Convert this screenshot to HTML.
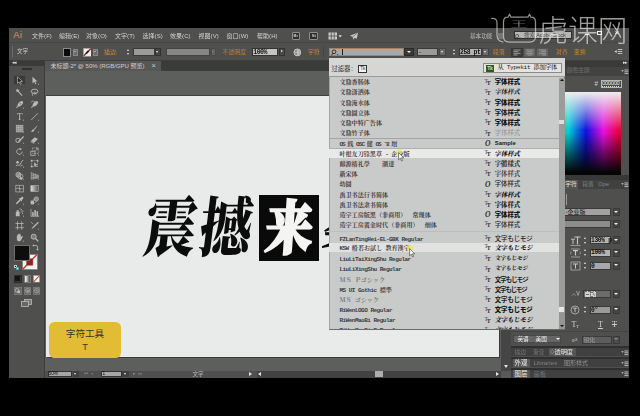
<!DOCTYPE html>
<html><head><meta charset="utf-8">
<style>
*{margin:0;padding:0;box-sizing:border-box}
html,body{width:640px;height:416px;overflow:hidden;background:#000}
body{font-family:"Liberation Sans","Noto Sans CJK SC",sans-serif;position:relative;color:#ccc}
.a{position:absolute}
.t{position:absolute;white-space:nowrap;line-height:1;text-spacing-trim:space-all}
#app{left:9px;top:28px;width:620px;height:350px;background:#4f504e;overflow:hidden}

#L{left:0;top:0;width:640px;height:416px;overflow:hidden;filter:blur(0.45px)}
.mn{font-size:6px;color:#d2d2d2;top:33.3px;letter-spacing:0.05px}
.or{color:#cf8336;font-size:5.9px;margin-top:1.2px}
.fld{background:#9a9a9a;border:0.5px solid #333}
</style></head><body>
<div class="a" id="app"></div>
<div class="a" id="L">
<!-- MENU BAR -->
<div class="t" style="left:13px;top:30.3px;font-size:9.8px;color:#ad7b62;font-weight:bold;letter-spacing:-0.3px">Ai</div>
<div class="t mn" style="left:32px">文件(F)</div>
<div class="t mn" style="left:59px">编辑(E)</div>
<div class="t mn" style="left:86px">对象(O)</div>
<div class="t mn" style="left:115px">文字(T)</div>
<div class="t mn" style="left:142.5px">选择(S)</div>
<div class="t mn" style="left:170px">效果(C)</div>
<div class="t mn" style="left:198.5px">视图(V)</div>
<div class="t mn" style="left:226.5px">窗口(W)</div>
<div class="t mn" style="left:257px">帮助(H)</div>

<!-- menu bar right icons -->
<div class="a" style="left:291.5px;top:32px;width:8.8px;height:7.5px;border:0.8px solid #8e8e8e;background:#2e2e2e;border-radius:1px"></div>
<div class="t" style="left:293.6px;top:33.7px;font-size:4.2px;color:#ccc;font-weight:bold">Br</div>
<div class="a" style="left:309.3px;top:32px;width:8.8px;height:7.5px;border:0.8px solid #8e8e8e;background:#2e2e2e;border-radius:1px"></div>
<div class="t" style="left:311.8px;top:33.7px;font-size:4.2px;color:#ccc;font-weight:bold">St</div>
<svg class="a" style="left:328.3px;top:31.8px" width="16" height="9" viewBox="0 0 16 9"><rect x="0.5" y="0.5" width="8.5" height="7" fill="#c9c9c9"/><path d="M3.3 0.5v7M6.2 0.5v7M0.5 4h8.5" stroke="#4f504e" stroke-width="0.8"/><path d="M10.5 3.2h3.4l-1.7 2.2z" fill="#ddd"/></svg>
<svg class="a" style="left:349px;top:31.5px" width="10" height="9" viewBox="0 0 11 10"><path d="M10 0.5L1 4.2l3 1.2 0.6 3.2 1.6-2.2 2.4 1z" fill="#c8c8c8"/><path d="M10 0.5L4 5.4" stroke="#4f504e" stroke-width="0.6"/></svg>
<div class="t" style="left:470px;top:33.5px;font-size:5.6px;color:#bcbcbc">基本功能</div>
<svg class="a" style="left:497px;top:33px" width="8" height="6" viewBox="0 0 8 6"><path d="M1 1h5M1 3h5M1 5h5" stroke="#bbb" stroke-width="0.7"/></svg>
<div class="a" style="left:513.5px;top:31.3px;width:58.5px;height:8.2px;background:#b6b6b6;border:0.5px solid #2e2e2e"></div>
<div class="t" style="left:515px;top:31.5px;font-size:7px;color:#333">ρ.</div><div class="t" style="left:524px;top:33px;font-size:5.6px;color:#4a4a4a;letter-spacing:-0.2px">搜索 Adobe Stock</div>
<div class="a" style="left:584.5px;top:33.6px;width:4.6px;height:1.2px;background:#e8e8e8"></div>
<div class="a" style="left:597.3px;top:30.8px;width:4.4px;height:4.4px;border:1px solid #eee"></div>
<div class="t" style="left:614.6px;top:28.6px;font-size:8px;color:#eee">×</div>

<!-- CONTROL BAR -->
<div class="a" id="cb" style="left:0;top:1.2px;width:640px;height:60px">
<div class="a" style="left:9px;top:41px;width:620px;height:0.7px;background:#474747"></div>
<div class="a" style="left:11.5px;top:45px;width:1px;height:12px;background:#6a6a6a"></div>
<div class="t" style="left:17px;top:48px;font-size:5.6px;color:#d0d0d0">文字</div>
<div class="a" style="left:63px;top:46.8px;width:8px;height:8.6px;background:#0b0b0b;border:0.8px solid #8a8a8a"></div>
<div class="a" style="left:73px;top:47.5px;width:5px;height:7px;background:#6b6b6b;border:0.5px solid #888"></div>
<div class="a" style="left:74.2px;top:50px;border:1.4px solid transparent;border-top:1.8px solid #eee"></div>
<svg class="a" style="left:82.7px;top:46.8px" width="8.6" height="8.6" viewBox="0 0 10.5 10.5"><rect x="0.4" y="0.4" width="9.7" height="9.7" fill="#f4f0ee" stroke="#9a9a9a" stroke-width="0.8"/><path d="M1 9.5L9.5 1" stroke="#8a2f28" stroke-width="1.7"/><path d="M3.6 6.900L6.900 3.600" stroke="#3a1a18" stroke-width="2"/></svg>
<div class="a" style="left:93px;top:47.5px;width:5px;height:7px;background:#6b6b6b;border:0.5px solid #888"></div>
<div class="a" style="left:94.2px;top:50px;border:1.4px solid transparent;border-top:1.8px solid #eee"></div>
<div class="t or" style="left:104px;top:47.3px">描边:</div>
<div class="a" style="left:127px;top:47.6px;border:1.6px solid transparent;border-bottom:2px solid #e4e4e4;border-top:0"></div>
<div class="a" style="left:127px;top:52.3px;border:1.6px solid transparent;border-top:2px solid #e4e4e4;border-bottom:0"></div>
<div class="a" style="left:133px;top:46.9px;width:21.5px;height:8.2px;background:#9b9b9b;border:0.5px solid #3a3a3a"></div>
<div class="a" style="left:155px;top:46.9px;width:6px;height:8.2px;background:#474747;border:0.5px solid #333"></div>
<div class="a" style="left:156.2px;top:50.2px;border:1.7px solid transparent;border-top:2.2px solid #f0f0f0"></div>
<div class="a" style="left:166px;top:46.9px;width:44px;height:8.2px;background:#868686;border:0.5px solid #444"></div>
<div class="a" style="left:211px;top:46.9px;width:5px;height:8.2px;background:#636363;border:0.5px solid #4a4a4a"></div>
<div class="a" style="left:212px;top:50.3px;border:1.4px solid transparent;border-top:1.8px solid #999"></div>
<div class="t or" style="left:222.5px;top:47.3px;color:#c47a30">不透明度</div>
<div class="a" style="left:252px;top:46.9px;width:25.5px;height:8.2px;background:#c4c4c4;border:0.5px solid #333"></div>
<div class="t" style="left:253.3px;top:49px;font-size:6.5px;color:#111;font-family:'Liberation Mono',monospace;letter-spacing:-0.5px;font-weight:bold">100%</div>
<div class="a" style="left:279px;top:46.9px;width:5.5px;height:8.2px;background:#4a4a4a;border:0.5px solid #333"></div>
<div class="a" style="left:281px;top:49.3px;border:1.7px solid transparent;border-left:2.3px solid #eee"></div>
<svg class="a" style="left:292.5px;top:46.6px" width="8.8" height="8.8" viewBox="0 0 10 10"><circle cx="5" cy="5" r="3.9" fill="#8c8c8c" stroke="#d4d4d4" stroke-width="0.9"/><path d="M5 1.2v7.6M1.3 5h7.4" stroke="#d4d4d4" stroke-width="0.6"/><path d="M5 1.3A3.8 3.8 0 0 1 5 8.7" fill="#cfcfcf" opacity=".6"/></svg>
<div class="t or" style="left:308px;top:47.3px">字符</div>
<div class="a" style="left:322.5px;top:45px;width:1px;height:12px;background:#444"></div>

<!-- font field -->
<div class="a" style="left:329px;top:46.7px;width:75px;height:8.6px;background:#a9a9a7;border:0.8px solid #a5815f"></div>
<svg class="a" style="left:331px;top:47.7px" width="8.5" height="7.5" viewBox="0 0 9 8"><circle cx="3.2" cy="3" r="2" fill="none" stroke="#222" stroke-width="0.9"/><path d="M1.8 4.6L0.6 6.6" stroke="#222" stroke-width="1"/><path d="M6 5.2h2l-1 1.3z" fill="#222"/></svg>
<div class="a" style="left:341.5px;top:47.9px;width:0.7px;height:6.2px;background:#222"></div>
<div class="a" style="left:404px;top:46.7px;width:10px;height:8.6px;background:#3a3a3a;border:0.5px solid #2a2a2a"></div>
<div class="a" style="left:406.6px;top:50px;border:2px solid transparent;border-top:2.6px solid #f2f2f2"></div>
<div class="a" style="left:417px;top:46.9px;width:21px;height:8.2px;background:#9b9b9b;border:0.5px solid #3a3a3a"></div>
<div class="t" style="left:419px;top:47.8px;font-size:6.4px;color:#222">-</div>
<div class="a" style="left:439px;top:46.9px;width:7px;height:8.2px;background:#6a6a6a;border:0.5px solid #444"></div>
<div class="a" style="left:440.6px;top:50.2px;border:1.7px solid transparent;border-top:2.2px solid #f0f0f0"></div>
<div class="a" style="left:452.5px;top:47.6px;border:1.6px solid transparent;border-bottom:2px solid #e4e4e4;border-top:0"></div>
<div class="a" style="left:452.5px;top:52.3px;border:1.6px solid transparent;border-top:2px solid #e4e4e4;border-bottom:0"></div>
<div class="a" style="left:459px;top:46.9px;width:22.5px;height:8.2px;background:#b4b4b4;border:0.5px solid #3a3a3a"></div>
<div class="t" style="left:460px;top:49px;font-size:6.4px;color:#111;font-family:'Liberation Mono',monospace;letter-spacing:-0.45px;font-weight:bold">258 pt</div>
<div class="a" style="left:482px;top:46.9px;width:6.5px;height:8.2px;background:#6a6a6a;border:0.5px solid #444"></div>
<div class="a" style="left:483.5px;top:50.2px;border:1.7px solid transparent;border-top:2.2px solid #f0f0f0"></div>
<div class="t or" style="left:493px;top:47.3px">段落</div>
<svg class="a" style="left:510.5px;top:46.5px" width="38" height="9" viewBox="0 0 38 11" preserveAspectRatio="none">
<rect x="0.3" y="0.3" width="11.5" height="10.4" fill="#3c3c3c" stroke="#2d2d2d" stroke-width="0.5"/>
<rect x="13" y="0.3" width="11.5" height="10.4" fill="#666" stroke="#4a4a4a" stroke-width="0.5"/>
<rect x="25.7" y="0.3" width="11.5" height="10.4" fill="#666" stroke="#4a4a4a" stroke-width="0.5"/>
<path d="M2.5 2.5h7M2.5 4.5h5M2.5 6.5h7M2.5 8.5h4" stroke="#bdbdbd" stroke-width="0.8"/>
<path d="M15 2.5h7.5M16 4.5h5.5M15 6.5h7.5M16.5 8.5h4.5" stroke="#a9a9a9" stroke-width="0.8"/>
<path d="M28 2.5h7M30 4.5h5M28 6.5h7M31 8.5h4" stroke="#a9a9a9" stroke-width="0.8"/>
</svg>
<div class="t or" style="left:556px;top:47.3px">对齐</div>
<div class="t or" style="left:574px;top:47.3px">变换</div>
<svg class="a" style="left:614px;top:47px" width="10" height="8" viewBox="0 0 10 8"><path d="M0.5 3.5l2.2-1.6v3.2z" fill="#ddd"/><path d="M3.8 1.5h4.5M3.8 3.5h4.5M3.8 5.5h4.5" stroke="#ddd" stroke-width="0.8"/></svg>

</div>
<!-- TAB ROW -->
<div class="a" style="left:9px;top:60px;width:620px;height:1px;background:#3e3e3e"></div>
<div class="a" style="left:45px;top:61px;width:467px;height:9.5px;background:#3b3b3b"></div>
<div class="a" style="left:45px;top:61px;width:115.5px;height:9.5px;background:#575757"></div>
<div class="t" style="left:50.5px;top:62.8px;font-size:6px;color:#d0d0d0">未标题-2* @ 50% (RGB/GPU 预览)</div>
<div class="t" style="left:151.5px;top:61.5px;font-size:7.5px;color:#cfcfcf">×</div>
<!-- canvas area -->
<div class="a" style="left:45px;top:70.5px;width:467px;height:300px;background:#5d5f5c"></div>
<div class="a" style="left:44px;top:61px;width:1.2px;height:317px;background:#3b3b3b"></div>
<div class="a" style="left:45.5px;top:95px;width:454px;height:1px;background:#414141"></div>
<div class="a" id="art" style="left:45.5px;top:96px;width:453px;height:261px;background:#e9ebea"></div>
<!-- TOOLS PANEL -->
<div class="a" style="left:9px;top:61px;width:35px;height:5px;background:#3a3a3a"></div>
<div class="t" style="left:11.5px;top:60.6px;font-size:4.5px;color:#ddd;letter-spacing:-1px">◂◂</div>
<div class="a" style="left:21.5px;top:68.3px;width:10.5px;height:1.5px;background:#303030"></div>
<div class="a" style="left:13.3px;top:74.8px;width:13px;height:10.6px;background:#3a3a3a;border:0.5px solid #4a4a4a"></div>
<svg class="a" style="left:14.9px;top:75.7px" width="9.2" height="9.2" viewBox="0 0 11 11"><path d="M3 1l0 8 2-2 1.4 3 1.2-.5-1.4-3h2.8z" fill="#222" stroke="#bababa" stroke-width="0.8"/></svg>
<svg class="a" style="left:29.7px;top:75.7px" width="9.2" height="9.2" viewBox="0 0 11 11"><path d="M3 1l0 8 2-2 1.4 3 1.2-.5-1.4-3h2.8z" fill="#bababa"/><path d="M9.3 9.3h1.6v1.6z" fill="#bdbdbd"/></svg>
<svg class="a" style="left:14.9px;top:87.7px" width="9.2" height="9.2" viewBox="0 0 11 11"><path d="M2 2l6.5 7" stroke="#bababa" stroke-width="1.3"/><path d="M3.2 0.6l.6 1.6 1.7.2-1.3 1.1.4 1.7-1.4-.9-1.5.9.4-1.7L.8 2.4l1.7-.2z" fill="#bababa"/></svg>
<svg class="a" style="left:29.7px;top:87.7px" width="9.2" height="9.2" viewBox="0 0 11 11"><ellipse cx="5.5" cy="4" rx="4" ry="2.6" fill="none" stroke="#bababa" stroke-width="1.1"/><path d="M3 6c-1 1 .5 2 .2 3.5" stroke="#bababa" fill="none" stroke-width="0.9"/><path d="M5 3.5l3 4-1.6-.2-.6 1.5z" fill="#bababa"/></svg>
<svg class="a" style="left:14.9px;top:99.7px" width="9.2" height="9.2" viewBox="0 0 11 11"><path d="M8.5 1.2c-3 .4-5 2.2-5.6 5.4l1.5 1.5c3.2-.6 5-2.6 5.4-5.6z" fill="#bababa"/><path d="M2.6 7l-1.6 3 3-1.6z" fill="#bababa"/><circle cx="6.3" cy="4.6" r="0.8" fill="#4f504e"/><path d="M9.3 9.3h1.6v1.6z" fill="#bdbdbd"/></svg>
<svg class="a" style="left:29.7px;top:99.7px" width="9.2" height="9.2" viewBox="0 0 11 11"><path d="M8.5 1.2c-3 .4-5 2.2-5.6 5.4l1.5 1.5c3.2-.6 5-2.6 5.4-5.6z" fill="#bababa"/><path d="M2.6 7l-1.6 3 3-1.6z" fill="#bababa"/><path d="M1 3c2-2.5 4-2 5-.5" stroke="#bababa" fill="none" stroke-width="0.8"/></svg>
<svg class="a" style="left:14.9px;top:112.2px" width="9.2" height="9.2" viewBox="0 0 11 11"><text x="5.5" y="9.6" text-anchor="middle" font-family="Liberation Serif,serif" font-size="11.5" fill="#bababa">T</text><path d="M9.3 9.3h1.6v1.6z" fill="#bdbdbd"/></svg>
<svg class="a" style="left:29.7px;top:112.2px" width="9.2" height="9.2" viewBox="0 0 11 11"><path d="M1.5 9.5L9.5 1.5" stroke="#bababa" stroke-width="1"/><path d="M9.3 9.3h1.6v1.6z" fill="#bdbdbd"/></svg>
<svg class="a" style="left:14.9px;top:123.7px" width="9.2" height="9.2" viewBox="0 0 11 11"><rect x="1.5" y="1.5" width="8" height="8" fill="#8a8a8a" stroke="#bababa" stroke-width="0.8"/><path d="M4.2 1.5v8M6.8 1.5v8M1.5 4.2h8M1.5 6.8h8" stroke="#bababa" stroke-width="0.6"/><path d="M9.3 9.3h1.6v1.6z" fill="#bdbdbd"/></svg>
<svg class="a" style="left:29.7px;top:123.7px" width="9.2" height="9.2" viewBox="0 0 11 11"><path d="M9.8 0.8L4.6 6l1 1z" fill="#bababa"/><path d="M4.2 6.3c-1.8-.2-1.6 2-3.2 2.6 2 .8 4.4.2 4.2-1.6z" fill="#bababa"/><path d="M9.3 9.3h1.6v1.6z" fill="#bdbdbd"/></svg>
<svg class="a" style="left:14.9px;top:135.2px" width="9.2" height="9.2" viewBox="0 0 11 11"><circle cx="3.6" cy="6.5" r="2.6" fill="none" stroke="#bababa" stroke-width="1"/><path d="M9.8 1.2L4.4 6.6l-.8 2 2-.8 5.2-5.4z" fill="#bababa"/><path d="M9.3 9.3h1.6v1.6z" fill="#bdbdbd"/></svg>
<svg class="a" style="left:29.7px;top:135.2px" width="9.2" height="9.2" viewBox="0 0 11 11"><path d="M1 7.2l4.6-4.6 4 2.2-4.6 4.6z" fill="#bababa"/><path d="M1 7.2l0 1.4 4 2.2 0-1.4z" fill="#9a9a9a"/><path d="M9.3 9.3h1.6v1.6z" fill="#bdbdbd"/></svg>
<svg class="a" style="left:14.9px;top:147.2px" width="9.2" height="9.2" viewBox="0 0 11 11"><path d="M8.6 5.5a3.3 3.3 0 1 1-1.6-2.8" fill="none" stroke="#bababa" stroke-width="1"/><path d="M5.8 0.8l2.6 1.8-2.8 1.2z" fill="#bababa"/><path d="M9.3 9.3h1.6v1.6z" fill="#bdbdbd"/></svg>
<svg class="a" style="left:29.7px;top:147.2px" width="9.2" height="9.2" viewBox="0 0 11 11"><rect x="1" y="5" width="5" height="5" fill="none" stroke="#bababa" stroke-width="0.9"/><rect x="3.2" y="1" width="6.8" height="6.8" fill="none" stroke="#bababa" stroke-width="0.8" stroke-dasharray="1.2 .8"/><path d="M6 5l3-3M9.4 1.4v2.2M9.4 1.4H7.2" stroke="#bababa" stroke-width="0.8" fill="none"/><path d="M9.3 9.3h1.6v1.6z" fill="#bdbdbd"/></svg>
<svg class="a" style="left:14.9px;top:159.2px" width="9.2" height="9.2" viewBox="0 0 11 11"><path d="M1 8.5c2-3 3.5 1 5.5-2.5S8 2 10 1.5" stroke="#bababa" fill="none" stroke-width="1.1"/><circle cx="3" cy="4" r="1.6" fill="#bababa"/><path d="M6.5 8.5l2.5-1.2" stroke="#bababa" stroke-width="1"/><path d="M9.3 9.3h1.6v1.6z" fill="#bdbdbd"/></svg>
<svg class="a" style="left:29.7px;top:159.2px" width="9.2" height="9.2" viewBox="0 0 11 11"><rect x="2" y="2" width="7" height="7" fill="none" stroke="#bababa" stroke-width="0.8" stroke-dasharray="1.4 .8"/><rect x="1" y="1" width="2" height="2" fill="#bababa"/><rect x="8" y="1" width="2" height="2" fill="#bababa"/><rect x="1" y="8" width="2" height="2" fill="#bababa"/><path d="M5 4l0 5 1.2-1.2.9 1.8.9-.4-.9-1.8H9z" fill="#bababa"/></svg>
<svg class="a" style="left:14.9px;top:171.2px" width="9.2" height="9.2" viewBox="0 0 11 11"><circle cx="4" cy="4.5" r="3" fill="#8a8a8a" stroke="#bababa" stroke-width="0.9"/><circle cx="6.5" cy="6.5" r="3" fill="none" stroke="#bababa" stroke-width="0.9"/><path d="M6 6l0 4.5 1.1-1 .8 1.5.8-.4-.8-1.5h1.6z" fill="#bababa"/><path d="M9.3 9.3h1.6v1.6z" fill="#bdbdbd"/></svg>
<svg class="a" style="left:29.7px;top:171.2px" width="9.2" height="9.2" viewBox="0 0 11 11"><path d="M1.5 1v9M4 2v7.5M6.3 3v6M8.3 3.8v4.8M10 4.4v3.8M1.5 3l8.5 2.4M1.5 5.5l8.5 1M1.5 8l8.5-.4M1.5 10l8.5-1.8" stroke="#bababa" stroke-width="0.7" fill="none"/><path d="M9.3 9.3h1.6v1.6z" fill="#bdbdbd"/></svg>
<svg class="a" style="left:14.9px;top:183.7px" width="9.2" height="9.2" viewBox="0 0 11 11"><rect x="1" y="1.5" width="9" height="8" fill="none" stroke="#bababa" stroke-width="0.8"/><path d="M1 5.5c3-1.5 6 1.5 9 0M5.5 1.5c-1.2 3 1.2 5 0 8" stroke="#bababa" stroke-width="0.7" fill="none"/><circle cx="5.5" cy="5.5" r="1" fill="#bababa"/></svg>
<svg class="a" style="left:29.7px;top:183.7px" width="9.2" height="9.2" viewBox="0 0 11 11"><defs><linearGradient id="gg"><stop offset="0" stop-color="#e0e0e0"/><stop offset="1" stop-color="#555"/></linearGradient></defs><rect x="1" y="2" width="9" height="7" fill="url(#gg)" stroke="#bababa" stroke-width="0.7"/></svg>
<svg class="a" style="left:14.9px;top:196.2px" width="9.2" height="9.2" viewBox="0 0 11 11"><path d="M9.6 1.4c-.8-.8-1.8-.4-2.4.4L6 3l-.7-.6-.9.9 3.300 3.300.9-.9L8 5l1.200-1.200c.8-.6 1.200-1.600.4-2.400z" fill="#bababa"/><path d="M5.200 4.400L1.600 8l-.4 1.800 1.800-.4 3.600-3.600z" fill="#bababa"/><path d="M9.3 9.3h1.6v1.6z" fill="#bdbdbd"/></svg>
<svg class="a" style="left:29.7px;top:196.2px" width="9.2" height="9.2" viewBox="0 0 11 11"><rect x="0.8" y="5.500" width="4" height="4.500" fill="#bababa"/><circle cx="7.600" cy="3.600" r="2.600" fill="#8a8a8a" stroke="#bababa" stroke-width="0.800"/><path d="M3 5l3-1.500M4.800 9l3.400-2.800" stroke="#bababa" stroke-width="0.600"/><path d="M9.3 9.3h1.6v1.6z" fill="#bdbdbd"/></svg>
<svg class="a" style="left:14.9px;top:208.2px" width="9.2" height="9.2" viewBox="0 0 11 11"><rect x="1" y="4.500" width="4.500" height="5.500" rx="0.800" fill="#bababa"/><rect x="2" y="2.600" width="2.500" height="2" fill="#bababa"/><circle cx="7.500" cy="2" r="0.800" fill="#bababa"/><circle cx="9.300" cy="3.800" r="0.800" fill="#bababa"/><circle cx="7.300" cy="4.600" r="0.700" fill="#bababa"/><circle cx="9" cy="6.400" r="0.700" fill="#bababa"/><circle cx="6" cy="1" r="0.600" fill="#bababa"/><path d="M9.3 9.3h1.6v1.6z" fill="#bdbdbd"/></svg>
<svg class="a" style="left:29.7px;top:208.2px" width="9.2" height="9.2" viewBox="0 0 11 11"><path d="M1.200 1v9h9" stroke="#bababa" fill="none" stroke-width="0.800"/><rect x="2.600" y="5" width="1.800" height="4.500" fill="#bababa"/><rect x="5.200" y="2.500" width="1.800" height="7" fill="#bababa"/><rect x="7.800" y="4" width="1.800" height="5.500" fill="#bababa"/><path d="M9.3 9.3h1.6v1.6z" fill="#bdbdbd"/></svg>
<svg class="a" style="left:14.9px;top:220.7px" width="9.2" height="9.2" viewBox="0 0 11 11"><path d="M3 0.500v10M8 0.500v10M0.500 3h10M0.500 8h10" stroke="#bababa" stroke-width="0.900"/></svg>
<svg class="a" style="left:29.7px;top:220.7px" width="9.2" height="9.2" viewBox="0 0 11 11"><path d="M9.500 1L3.500 7l-2 3 3-2 6-6z" fill="#bababa"/><path d="M1 1l3 3" stroke="#bababa" stroke-width="0.800"/><path d="M9.3 9.3h1.6v1.6z" fill="#bdbdbd"/></svg>
<svg class="a" style="left:14.9px;top:232.7px" width="9.2" height="9.2" viewBox="0 0 11 11"><path d="M2.200 6.500V3.400c0-.8 1.100-.8 1.100 0V2c0-.9 1.200-.9 1.200 0v-.6c0-.9 1.200-.9 1.200 0V2c0-.8 1.200-.8 1.200 0v3.200l1.300-1.500c.6-.6 1.500 0 1 .8L7.400 8.500c-.5.900-1.300 1.500-2.400 1.500-1.800 0-2.800-1.200-2.800-3.500z" fill="#bababa"/><path d="M9.3 9.3h1.6v1.6z" fill="#bdbdbd"/></svg>
<svg class="a" style="left:29.7px;top:232.7px" width="9.2" height="9.2" viewBox="0 0 11 11"><circle cx="4.400" cy="4.400" r="3" fill="#7a7a7a" stroke="#bababa" stroke-width="1.100"/><path d="M6.600 6.600l3.400 3.400" stroke="#bababa" stroke-width="1.600"/></svg>
<div class="a" style="left:22px;top:253.500px;width:15.500px;height:16px;background:#f3f1f0;border:0.600px solid #888"></div>
<svg class="a" style="left:22px;top:253.500px" width="15.500" height="16" viewBox="0 0 15.500 16"><path d="M0.500 15.500L15 0.500" stroke="#c8322a" stroke-width="1.300"/><rect x="4.600" y="4.800" width="6.300" height="6.400" fill="#7a2a26" stroke="#c8322a" stroke-width="0.500"/></svg>
<div class="a" style="left:13.500px;top:245px;width:16px;height:16px;background:#0d0d0d;border:0.800px solid #6e6e6e"></div>
<svg class="a" style="left:32px;top:244px" width="7" height="7" viewBox="0 0 7 7"><path d="M1.500 1.500h2.500a1.500 1.500 0 0 1 1.500 1.500v2.500" stroke="#bababa" fill="none" stroke-width="0.800"/><path d="M0.300 1.500l1.700-1.200v2.400zM5.500 6.700L4.300 5h2.400z" fill="#bababa"/></svg>
<div class="a" style="left:13.500px;top:264.500px;width:3.600px;height:3.600px;background:#111;border:0.500px solid #ccc"></div>
<div class="a" style="left:15.500px;top:266.500px;width:3.600px;height:3.600px;background:#eee;border:0.500px solid #4aa"></div>
<div class="a" style="left:13.500px;top:275px;width:8px;height:7.500px;background:#3a3a3a;border:0.500px solid #2b2b2b"></div>
<div class="a" style="left:15px;top:276.300px;width:5px;height:5px;background:#141414"></div>
<div class="a" style="left:23.500px;top:275px;width:7px;height:7.500px;background:linear-gradient(90deg,#fff,#444);border:0.500px solid #777"></div>
<svg class="a" style="left:33px;top:275px" width="7" height="7.500" viewBox="0 0 7 7.500"><rect x="0.300" y="0.300" width="6.400" height="6.900" fill="#f4f4f4" stroke="#777" stroke-width="0.500"/><path d="M0.600 7L6.500 0.500" stroke="#c8322a" stroke-width="1.100"/></svg>
<div class="a" style="left:14px;top:287px;width:7.500px;height:7.500px;background:#676767;border:0.500px solid #777"></div>
<div class="a" style="left:23.5px;top:287px;width:7.500px;height:7.500px;background:#676767;border:0.500px solid #777"></div>
<div class="a" style="left:32.5px;top:287px;width:7.500px;height:7.500px;background:#676767;border:0.500px solid #777"></div>
<svg class="a" style="left:14px;top:287px" width="7.500" height="7.500" viewBox="0 0 7.500 7.500"><circle cx="3" cy="3.300" r="1.800" fill="none" stroke="#bababa" stroke-width="0.700"/><rect x="3.300" y="3.500" width="2.800" height="2.600" fill="#bababa"/></svg>
<svg class="a" style="left:23.500px;top:287px" width="7.500" height="7.500" viewBox="0 0 7.500 7.500"><circle cx="3.700" cy="3.700" r="2.200" fill="none" stroke="#aaa" stroke-width="0.700"/><rect x="2.500" y="2.800" width="2.400" height="2.200" fill="#999"/></svg>
<svg class="a" style="left:32.500px;top:287px" width="7.500" height="7.500" viewBox="0 0 7.500 7.500"><circle cx="3.700" cy="3.700" r="2.200" fill="none" stroke="#aaa" stroke-width="0.700"/><circle cx="3.700" cy="3.700" r="0.900" fill="#999"/></svg>
<svg class="a" style="left:20.500px;top:298.500px" width="11" height="8" viewBox="0 0 11 8"><rect x="3.500" y="0.500" width="7" height="5" fill="#7a7a7a" stroke="#bababa" stroke-width="0.800"/><rect x="0.500" y="2.500" width="7" height="5" fill="#666" stroke="#bababa" stroke-width="0.800"/></svg>
<!-- CANVAS CONTENT -->
<div class="a" style="left:498.5px;top:97px;width:1.2px;height:261px;background:#3a3a3a"></div>
<div class="a" style="left:46.5px;top:357px;width:453px;height:1.2px;background:#3a3a3a"></div>
<div class="a" style="left:259px;top:195px;width:60.1px;height:65.5px;background:#0a0a0a"></div>
<div class="t" id="cal1" style="left:137.3px;top:192.5px;font-family:'Noto Serif CJK SC',serif;font-weight:900;font-size:60px;color:#0c0c0c;letter-spacing:3.5px;transform:skewX(-7deg) scale(0.87,1.08);transform-origin:50% 50%">震撼</div>
<div class="t" id="cal2" style="left:259.5px;top:193.5px;font-family:'Noto Serif CJK SC',serif;font-weight:900;font-size:59px;color:#f4f4f2;-webkit-text-stroke:2.4px #f4f4f2;transform:skewX(-4deg) scale(0.8,0.99)">来</div>
<div class="t" id="cal3" style="-webkit-text-stroke:1px #0c0c0c;left:320.5px;top:195px;font-family:'Noto Serif CJK SC',serif;font-weight:900;font-size:60px;color:#0c0c0c;transform:skewX(-7deg) scale(0.9,1.08);transform-origin:50% 50%">袭</div>
<!-- yellow hint -->
<div class="a" style="left:49px;top:321.5px;width:72px;height:36.5px;background:#e2bc34;border-radius:5.5px"></div>
<div class="t" style="left:49px;width:72px;text-align:center;top:328.6px;font-size:9.6px;color:#3b3426;font-weight:400">字符工具</div>
<div class="t" style="left:49px;width:72px;text-align:center;top:342.6px;font-size:9.2px;color:#3b3426">T</div>
<!-- status bar -->
<div class="a" style="left:45px;top:370.5px;width:456px;height:7.5px;background:#424242"></div>
<div class="a" style="left:45px;top:371px;width:211.5px;height:7px;background:#4f4f4f"></div>
<div class="t" style="left:192.5px;top:372px;font-size:5.6px;color:#b4b4b4">文字</div>
<div class="a" style="left:249px;top:372.3px;border:2.2px solid transparent;border-left:3px solid #e6e6e6"></div>
<div class="a" style="left:255.5px;top:372.3px;border:2.2px solid transparent;border-right:3px solid #e6e6e6"></div>
<div class="a" style="left:47.5px;top:371.2px;width:24.5px;height:6.3px;background:#a6a6a6;border:0.4px solid #333"></div>
<div class="t" style="left:48.5px;top:372.2px;font-size:4.8px;color:#111">50%</div>
<div class="a" style="left:72.5px;top:371.2px;width:6.5px;height:6.3px;background:#3f3f3f"></div>
<div class="a" style="left:74px;top:373.4px;border:1.8px solid transparent;border-top:2.2px solid #f0f0f0"></div>
<div class="t" style="left:84px;top:372px;font-size:4.6px;color:#8a8a8a;letter-spacing:2.6px">⏮◂</div>
<div class="a" style="left:101px;top:371.2px;width:20.5px;height:6.3px;background:#a6a6a6;border:0.4px solid #333"></div>
<div class="t" style="left:102.5px;top:372.2px;font-size:4.8px;color:#111">1</div>
<div class="a" style="left:122px;top:371.2px;width:6.5px;height:6.3px;background:#3f3f3f"></div>
<div class="a" style="left:123.5px;top:373.4px;border:1.8px solid transparent;border-top:2.2px solid #f0f0f0"></div>
<div class="t" style="left:132.5px;top:372px;font-size:4.6px;color:#8a8a8a;letter-spacing:2.6px">▸⏭</div>
<div class="a" style="left:495.5px;top:372px;border:2.4px solid transparent;border-left:3.2px solid #e6e6e6"></div>
<div class="a" style="left:375px;top:371.3px;width:7.5px;height:6.2px;background:#adadad"></div>
<!-- v scrollbar -->
<div class="a" style="left:501px;top:61px;width:10px;height:309.5px;background:#454545"></div>
<div class="a" style="left:501px;top:370.5px;width:10px;height:7.5px;background:#585858"></div>
<div class="a" style="left:503.6px;top:365px;border:2.4px solid transparent;border-top:3.2px solid #e6e6e6"></div>
<!-- RIGHT DOCK -->
<div class="a" style="left:511px;top:61px;width:118px;height:317px;background:#4f504e"></div>
<div class="a" style="left:511px;top:61px;width:118px;height:5.5px;background:#3a3a3a"></div>
<div class="t" style="left:622.5px;top:60.8px;font-size:4.5px;color:#ddd;letter-spacing:-1px">▸▸</div>
<div class="a" style="left:511px;top:66.5px;width:118px;height:9.5px;background:#424242"></div>
<div class="t" style="left:567px;top:68.4px;font-size:5.7px;color:#707070">颜色主题</div>
<svg class="a" style="left:620.5px;top:68.5px" width="8" height="6" viewBox="0 0 8 6"><path d="M0.3 1.2h2.4l-1.2 1.6z" fill="#d8d8d8"/><path d="M3.4 1h4M3.4 2.8h4M3.4 4.6h4" stroke="#d8d8d8" stroke-width="0.8"/></svg>
<div class="t" style="left:594.5px;top:80.6px;font-size:6.4px;color:#cfcfcf">#</div>
<div class="a" style="left:600.5px;top:79.5px;width:21px;height:8.4px;background:#4a4a4a;border:0.7px solid #b8b8b8"></div>
<div class="t" style="left:602px;top:80.7px;font-size:5.8px;color:#e8e8e8;letter-spacing:-0.3px;text-decoration:underline dotted #ddd">000000</div>
<div class="a" style="left:516px;top:92px;width:105px;height:83px;background:linear-gradient(90deg,#e8002a,#e8e800 16.7%,#00d800 33.3%,#00d0d8 50%,#1010e0 66.7%,#e810e0 83.3%,#e8002a)"></div>
<div class="a" style="left:516px;top:92px;width:105px;height:83px;background:linear-gradient(180deg,#eeeeee 0%,rgba(238,238,238,0) 46%,rgba(0,0,0,0) 48%,rgba(0,0,0,0.55) 75%,#050505 97%)"></div>
<div class="a" style="left:511px;top:175px;width:118px;height:5px;background:#383838"></div>
<div class="a" style="left:511px;top:180px;width:118px;height:8.5px;background:#414141"></div>
<div class="a" style="left:564.5px;top:180px;width:13.5px;height:8.5px;background:#555"></div>
<div class="t" style="left:565.3px;top:181.6px;font-size:5.8px;color:#e0e0e0">字符</div>
<div class="t" style="left:582.5px;top:181.8px;font-size:5.5px;color:#858585">段落</div>
<div class="t" style="left:598px;top:181.6px;font-size:5.8px;color:#858585">Ope</div>
<svg class="a" style="left:620.5px;top:181.5px" width="8" height="6" viewBox="0 0 8 6"><path d="M0.3 1.2h2.4l-1.2 1.6z" fill="#d8d8d8"/><path d="M3.4 1h4M3.4 2.8h4M3.4 4.6h4" stroke="#d8d8d8" stroke-width="0.8"/></svg>
<div class="a" style="left:566px;top:194px;width:0.8px;height:11px;background:#9a9a9a"></div>
<div class="a" style="left:520px;top:207.5px;width:91px;height:8.5px;background:#a2a2a2;border:0.5px solid #3a3a3a"></div>
<div class="t" style="left:565.5px;top:208.8px;font-size:6px;color:#151515">-企业版</div>
<div class="a" style="left:612.5px;top:207.5px;width:7.5px;height:8.5px;background:#454545;border:0.5px solid #3a3a3a"></div>
<div class="a" style="left:614.25px;top:210.55px;border:2px solid transparent;border-top:2.6px solid #f0f0f0;border-bottom:0"></div>
<div class="a" style="left:520px;top:220.3px;width:91px;height:8px;background:#8b8b8b;border:0.5px solid #3a3a3a"></div>
<div class="a" style="left:612.5px;top:220.3px;width:7.5px;height:8px;background:#454545;border:0.5px solid #3a3a3a"></div>
<div class="a" style="left:614.25px;top:223.10000000000002px;border:2px solid transparent;border-top:2.6px solid #f0f0f0;border-bottom:0"></div>
<svg class="a" style="left:570px;top:235.5px" width="11" height="10" viewBox="0 0 11 10"><path d="M0.5 9.5h10" stroke="#bbb" stroke-width="0.7"/><path d="M1 3.2h4M3 3.2v5" stroke="#c8c8c8" stroke-width="0.9" fill="none"/><path d="M4.5 1h6M7.5 1v7.5" stroke="#c8c8c8" stroke-width="1.1" fill="none"/></svg>
<div class="a" style="left:584px;top:236.70000000000002px;border:1.8px solid transparent;border-bottom:2.2px solid #e4e4e4;border-top:0"></div>
<div class="a" style="left:584px;top:241.5px;border:1.8px solid transparent;border-top:2.2px solid #e4e4e4;border-bottom:0"></div>
<div class="a" style="left:589.5px;top:236.3px;width:21.5px;height:8px;background:#b4b4b4;border:0.5px solid #3a3a3a"></div>
<div class="t" style="left:591.0px;top:238.2px;font-size:6.3px;color:#111;letter-spacing:-0.35px;font-family:'Liberation Mono','Noto Sans CJK SC',monospace;font-weight:bold">130% p</div>
<div class="a" style="left:612.5px;top:236.3px;width:7.5px;height:8px;background:#454545;border:0.5px solid #3a3a3a"></div>
<div class="a" style="left:614.25px;top:239.10000000000002px;border:2px solid transparent;border-top:2.6px solid #f0f0f0;border-bottom:0"></div>
<svg class="a" style="left:570px;top:247.5px" width="11" height="10" viewBox="0 0 11 10"><path d="M1 1h9M1 9h9" stroke="#bbb" stroke-width="0.7"/><path d="M3 2.6h5M5.5 2.6v5" stroke="#c8c8c8" stroke-width="1.1" fill="none"/><path d="M0.8 3.5v3M10.2 3.5v3" stroke="#bbb" stroke-width="0.6"/></svg>
<div class="a" style="left:584px;top:248.9px;border:1.8px solid transparent;border-bottom:2.2px solid #e4e4e4;border-top:0"></div>
<div class="a" style="left:584px;top:253.7px;border:1.8px solid transparent;border-top:2.2px solid #e4e4e4;border-bottom:0"></div>
<div class="a" style="left:589.5px;top:248.5px;width:21.5px;height:8px;background:#b4b4b4;border:0.5px solid #3a3a3a"></div>
<div class="t" style="left:591.0px;top:250.4px;font-size:6.3px;color:#111;letter-spacing:-0.35px;font-family:'Liberation Mono','Noto Sans CJK SC',monospace;font-weight:bold">100%</div>
<div class="a" style="left:612.5px;top:248.5px;width:7.5px;height:8px;background:#454545;border:0.5px solid #3a3a3a"></div>
<div class="a" style="left:614.25px;top:251.3px;border:2px solid transparent;border-top:2.6px solid #f0f0f0;border-bottom:0"></div>
<svg class="a" style="left:570px;top:260.5px" width="11" height="10" viewBox="0 0 11 10"><rect x="1" y="1" width="9" height="8" fill="none" stroke="#bbb" stroke-width="0.7"/><path d="M3 3h5M5.5 3v4.5" stroke="#c8c8c8" stroke-width="1" fill="none"/></svg>
<div class="a" style="left:584px;top:261.9px;border:1.8px solid transparent;border-bottom:2.2px solid #e4e4e4;border-top:0"></div>
<div class="a" style="left:584px;top:266.7px;border:1.8px solid transparent;border-top:2.2px solid #e4e4e4;border-bottom:0"></div>
<div class="a" style="left:589.5px;top:261.5px;width:21.5px;height:8px;background:#a8a8a8;border:0.5px solid #3a3a3a"></div>
<div class="t" style="left:591.0px;top:263.5px;font-size:6.3px;color:#111;letter-spacing:-0.35px;font-family:'Liberation Mono','Noto Sans CJK SC',monospace;font-weight:bold">0</div>
<div class="a" style="left:612.5px;top:261.5px;width:7.5px;height:8px;background:#454545;border:0.5px solid #3a3a3a"></div>
<div class="a" style="left:614.25px;top:264.3px;border:2px solid transparent;border-top:2.6px solid #f0f0f0;border-bottom:0"></div>
<svg class="a" style="left:571px;top:289px" width="10" height="9" viewBox="0 0 10 9"><path d="M1 6.5c1.500-2 2.500-2 3.500 0" stroke="#aaa" fill="none" stroke-width="0.8"/><path d="M5.500 2l1.500 4.500M8.500 2L7 6.500" stroke="#aaa" stroke-width="0.8"/></svg>
<div class="a" style="left:583px;top:289.8px;width:28px;height:8px;background:#6c6c6c;border:0.5px solid #3a3a3a"></div>
<div class="t" style="left:584.5px;top:291.9px;font-size:6px;color:#eee;letter-spacing:-0.35px;font-family:'Liberation Mono','Noto Sans CJK SC',monospace;font-weight:bold">自动</div>
<div class="a" style="left:612.5px;top:289.8px;width:7.5px;height:8px;background:#454545;border:0.5px solid #3a3a3a"></div>
<div class="a" style="left:614.25px;top:292.6px;border:2px solid transparent;border-top:2.6px solid #f0f0f0;border-bottom:0"></div>
<svg class="a" style="left:570px;top:304.500px" width="10" height="10" viewBox="0 0 10 10"><circle cx="5" cy="5" r="4" fill="none" stroke="#bbb" stroke-width="0.8"/><path d="M3.200 3.200h3.600M5 3.200v4" stroke="#ccc" stroke-width="0.9"/></svg>
<div class="a" style="left:584px;top:305.9px;border:1.8px solid transparent;border-bottom:2.2px solid #e4e4e4;border-top:0"></div>
<div class="a" style="left:584px;top:310.7px;border:1.8px solid transparent;border-top:2.2px solid #e4e4e4;border-bottom:0"></div>
<div class="a" style="left:589.5px;top:305.5px;width:21.5px;height:8px;background:#9a9a9a;border:0.5px solid #3a3a3a"></div>
<div class="t" style="left:591.0px;top:307.5px;font-size:6.3px;color:#111;letter-spacing:-0.35px;font-family:'Liberation Mono','Noto Sans CJK SC',monospace;font-weight:bold">0°</div>
<div class="a" style="left:612.5px;top:305.5px;width:7.5px;height:8px;background:#454545;border:0.5px solid #3a3a3a"></div>
<div class="a" style="left:614.25px;top:308.3px;border:2px solid transparent;border-top:2.6px solid #f0f0f0;border-bottom:0"></div>
<div class="t" style="left:571.5px;top:320.5px;font-size:8px;color:#d0d0d0;font-family:'Liberation Serif',serif">T</div>
<div class="t" style="left:576.2px;top:324.500px;font-size:4.5px;color:#d0d0d0;font-family:'Liberation Serif',serif">T</div>
<div class="t" style="left:598px;top:320.5px;font-size:8px;color:#d0d0d0;font-family:'Liberation Serif',serif;text-decoration:underline">T</div>
<div class="t" style="left:612px;top:320.5px;font-size:8px;color:#d0d0d0;font-family:'Liberation Serif',serif;text-decoration:line-through">T</div>
<div class="a" style="left:511px;top:330.5px;width:118px;height:0.6px;background:#444"></div>
<div class="a" style="left:513px;top:335.2px;width:48px;height:8px;background:#656565;border:0.5px solid #484848"></div>
<div class="t" style="left:517.5px;top:336.600px;font-size:5.6px;color:#f0f0f0">英语</div>
<div class="t" style="left:529.5px;top:336.600px;font-size:5.6px;color:#8a8a8a">：</div>
<div class="t" style="left:535.6px;top:336.600px;font-size:5.6px;color:#f0f0f0">美国</div>
<div class="a" style="left:555.8px;top:338.2px;border:2.1px solid transparent;border-top:2.8px solid #f0f0f0;border-bottom:0"></div>
<div class="t" style="left:571.5px;top:336.500px;font-size:6px;color:#aaa">a</div><div class="t" style="left:575px;top:338px;font-size:4.5px;color:#aaa">a</div>
<div class="a" style="left:582px;top:335.5px;width:29.5px;height:8px;background:#5d5d5d;border:0.5px solid #3a3a3a"></div>
<div class="t" style="left:583.5px;top:337.6px;font-size:6px;color:#8a8a8a;letter-spacing:-0.35px;font-family:'Liberation Mono','Noto Sans CJK SC',monospace;font-weight:bold">锐化</div>
<div class="a" style="left:612.5px;top:335.5px;width:7.5px;height:8px;background:#4c4c4c;border:0.5px solid #3a3a3a"></div>
<div class="a" style="left:614.25px;top:338.3px;border:2px solid transparent;border-top:2.6px solid #8a8a8a;border-bottom:0"></div>
<div class="a" style="left:511px;top:345.8px;width:118px;height:2px;background:#303030"></div>
<div class="a" style="left:511px;top:347.8px;width:118px;height:8.7px;background:#404040"></div>
<div class="t" style="left:514.5px;top:349.800px;font-size:5.7px;color:#757575">描边</div>
<div class="t" style="left:533px;top:349.800px;font-size:5.7px;color:#757575">渐变</div>
<div class="a" style="left:548.500px;top:347.800px;width:27px;height:8.700px;background:#555"></div>
<div class="t" style="left:550px;top:349.300px;font-size:6.2px;color:#eaeaea"><span style="font-size:4.5px;vertical-align:1px">◇</span>透明度</div>
<svg class="a" style="left:620.5px;top:349.5px" width="8" height="6" viewBox="0 0 8 6"><path d="M0.3 1.2h2.4l-1.2 1.6z" fill="#d8d8d8"/><path d="M3.4 1h4M3.4 2.8h4M3.4 4.6h4" stroke="#d8d8d8" stroke-width="0.8"/></svg>
<div class="a" style="left:511px;top:356.8px;width:118px;height:2px;background:#303030"></div>
<div class="a" style="left:511px;top:358.8px;width:118px;height:8.7px;background:#404040"></div>
<div class="a" style="left:512.500px;top:358.800px;width:17px;height:8.700px;background:#585858"></div>
<div class="t" style="left:514.500px;top:360.200px;font-size:6.4px;color:#f0f0f0">外观</div>
<div class="t" style="left:533.500px;top:360.200px;font-size:6.2px;color:#808080">Libraries</div>
<div class="t" style="left:564px;top:360.200px;font-size:6px;color:#919191">图形样式</div>
<svg class="a" style="left:620.5px;top:360.5px" width="8" height="6" viewBox="0 0 8 6"><path d="M0.3 1.2h2.4l-1.2 1.6z" fill="#d8d8d8"/><path d="M3.4 1h4M3.4 2.8h4M3.4 4.6h4" stroke="#d8d8d8" stroke-width="0.8"/></svg>
<div class="a" style="left:511px;top:367.5px;width:118px;height:2px;background:#303030"></div>
<div class="a" style="left:511px;top:369.5px;width:118px;height:8.5px;background:#404040"></div>
<div class="a" style="left:512.500px;top:369.500px;width:17px;height:8.500px;background:#585858"></div>
<div class="t" style="left:514.500px;top:370.800px;font-size:6.4px;color:#f0f0f0">图层</div>
<div class="t" style="left:533.500px;top:370.800px;font-size:6.2px;color:#757575">画板</div>
<svg class="a" style="left:620.5px;top:371.3px" width="8" height="6" viewBox="0 0 8 6"><path d="M0.3 1.2h2.4l-1.2 1.6z" fill="#d8d8d8"/><path d="M3.4 1h4M3.4 2.8h4M3.4 4.6h4" stroke="#d8d8d8" stroke-width="0.8"/></svg>
<!-- FONT DROPDOWN -->
<div class="a" style="left:328.5px;top:58.4px;width:236.5px;height:271.5px;background:#c9cbca;border:0.6px solid #6a6a6a;border-top:0;border-left:1.6px solid #a3a5a3"></div>
<div class="a" style="left:329px;top:58.4px;width:235.5px;height:18.6px;background:#d6d6d5;border-bottom:0.7px solid #9a9a9a"></div>
<div class="t" style="left:331.5px;top:66.1px;font-size:6.3px;color:#222;font-family:'Liberation Serif','Noto Serif CJK SC',serif;font-weight:500">过滤器：</div>
<div class="a" style="left:358.4px;top:64.6px;width:8.4px;height:8.4px;background:#f2f2f2;border:0.7px solid #333"></div>
<div class="t" style="left:360.2px;top:66.8px;font-size:4.8px;color:#333;letter-spacing:-0.2px">Tk</div>
<div class="a" style="left:482.5px;top:63.3px;width:79.5px;height:10.2px;background:#e4e4e1;border:0.7px solid #8a8a88"></div>
<div class="a" style="left:486.2px;top:64.6px;width:7.6px;height:7.4px;background:#3d541f"></div>
<div class="t" style="left:487.3px;top:66px;font-size:5px;color:#cfe0a8;font-weight:bold;letter-spacing:-0.3px">Tk</div>
<div class="t" style="left:497.5px;top:65.2px;font-size:6.2px;color:#222;font-family:'Liberation Mono','Noto Serif CJK SC',monospace;letter-spacing:-0.35px;font-weight:500">从 Typekit 添加字体</div>
<div class="a" style="left:329px;top:148.3px;width:229.8px;height:10px;background:#e9e9e8"></div>
<div class="a" style="left:329px;top:242.8px;width:229.8px;height:9.6px;background:#e2e2e1"></div>
<div class="a" style="left:329px;top:137.6px;width:229.8px;height:0.7px;background:#a4a4a4"></div>
<div class="a" style="left:329px;top:148px;width:229.8px;height:0.5px;background:#b0b0b0"></div>
<div class="a" style="left:329px;top:231.3px;width:229.8px;height:0.6px;background:#bdbfbe"></div>
<div class="a" style="left:329px;top:77.5px;width:236px;height:251.5px;overflow:hidden">
<div class="t" style="left:10.4px;top:2.9px;font-size:6px;color:#404040;font-family:'Liberation Mono','Noto Serif CJK SC',monospace;letter-spacing:-0.5px;font-weight:700"><span style="letter-spacing:0;font-size:6.1px">文鼎香肠体</span></div>
<div class="t" style="left:155.6px;top:1.4px;font-size:5.6px;color:#444;font-family:'Liberation Serif',serif">T</div><div class="t" style="left:157.8px;top:3.3px;font-size:5.8px;color:#2e2e2e;font-family:'Liberation Serif',serif;font-weight:bold">T</div>
<div class="t" style="left:165.8px;top:1.9px;font-size:6.4px;color:#111;font-family:'Noto Sans CJK SC',sans-serif;font-weight:900;letter-spacing:-0.1px;">字体样式</div>
<div class="t" style="left:10.4px;top:12.6px;font-size:6px;color:#404040;font-family:'Liberation Mono','Noto Serif CJK SC',monospace;letter-spacing:-0.5px;font-weight:700"><span style="letter-spacing:0;font-size:6.1px">文鼎潇洒体</span></div>
<div class="t" style="left:155.6px;top:11.1px;font-size:5.6px;color:#444;font-family:'Liberation Serif',serif">T</div><div class="t" style="left:157.8px;top:13.0px;font-size:5.8px;color:#2e2e2e;font-family:'Liberation Serif',serif;font-weight:bold">T</div>
<div class="t" style="left:165.8px;top:11.6px;font-size:6.4px;color:#111;font-family:'Noto Serif CJK SC',serif;font-weight:700;letter-spacing:-0.1px;transform:skewX(-10deg);">字体样式</div>
<div class="t" style="left:10.4px;top:23.0px;font-size:6px;color:#404040;font-family:'Liberation Mono','Noto Serif CJK SC',monospace;letter-spacing:-0.5px;font-weight:700"><span style="letter-spacing:0;font-size:6.1px">文鼎淹水体</span></div>
<div class="t" style="left:155.6px;top:21.5px;font-size:5.6px;color:#444;font-family:'Liberation Serif',serif">T</div><div class="t" style="left:157.8px;top:23.4px;font-size:5.8px;color:#2e2e2e;font-family:'Liberation Serif',serif;font-weight:bold">T</div>
<div class="t" style="left:165.8px;top:22.0px;font-size:6.4px;color:#111;font-family:'Noto Sans CJK SC',sans-serif;font-weight:900;letter-spacing:-0.1px;">字体样式</div>
<div class="t" style="left:10.4px;top:33.0px;font-size:6px;color:#404040;font-family:'Liberation Mono','Noto Serif CJK SC',monospace;letter-spacing:-0.5px;font-weight:700"><span style="letter-spacing:0;font-size:6.1px">文鼎圆立体</span></div>
<div class="t" style="left:155.6px;top:31.5px;font-size:5.6px;color:#444;font-family:'Liberation Serif',serif">T</div><div class="t" style="left:157.8px;top:33.4px;font-size:5.8px;color:#2e2e2e;font-family:'Liberation Serif',serif;font-weight:bold">T</div>
<div class="t" style="left:165.8px;top:32.0px;font-size:6.4px;color:#111;font-family:'Noto Sans CJK SC',sans-serif;font-weight:700;letter-spacing:-0.1px;">字体样式</div>
<div class="t" style="left:10.4px;top:43.4px;font-size:6px;color:#404040;font-family:'Liberation Mono','Noto Serif CJK SC',monospace;letter-spacing:-0.5px;font-weight:700"><span style="letter-spacing:0;font-size:6.1px">文鼎中特广告体</span></div>
<div class="t" style="left:155.6px;top:41.9px;font-size:5.6px;color:#444;font-family:'Liberation Serif',serif">T</div><div class="t" style="left:157.8px;top:43.8px;font-size:5.8px;color:#2e2e2e;font-family:'Liberation Serif',serif;font-weight:bold">T</div>
<div class="t" style="left:165.8px;top:42.4px;font-size:6.4px;color:#111;font-family:'Noto Sans CJK SC',sans-serif;font-weight:800;letter-spacing:-0.1px;">字体样式</div>
<div class="t" style="left:10.4px;top:53.6px;font-size:6px;color:#404040;font-family:'Liberation Mono','Noto Serif CJK SC',monospace;letter-spacing:-0.5px;font-weight:700"><span style="letter-spacing:0;font-size:6.1px">文鼎竹子体</span></div>
<div class="t" style="left:155.6px;top:52.1px;font-size:5.6px;color:#444;font-family:'Liberation Serif',serif">T</div><div class="t" style="left:157.8px;top:54.0px;font-size:5.8px;color:#2e2e2e;font-family:'Liberation Serif',serif;font-weight:bold">T</div>
<div class="t" style="left:165.8px;top:52.6px;font-size:6.4px;color:#777;font-family:'Noto Serif CJK SC',serif;font-weight:300;letter-spacing:-0.1px;">字体样式</div>
<div class="t" style="left:10.4px;top:64.0px;font-size:6px;color:#404040;font-family:'Liberation Mono','Noto Serif CJK SC',monospace;letter-spacing:-0.95px;font-weight:700">OS <span style="letter-spacing:0;font-size:6.1px">銭</span> OSC <span style="letter-spacing:0;font-size:6.1px">健</span> OS ˜8 <span style="letter-spacing:0;font-size:6.1px">壇</span></div>
<div class="t" style="left:156px;top:62.6px;font-size:7.6px;color:#333;font-family:'Liberation Serif',serif;font-style:italic;font-weight:bold">O</div>
<div class="t" style="left:165.8px;top:63.0px;font-size:5.9px;color:#222;font-family:'Liberation Sans',sans-serif;font-weight:700;letter-spacing:0;">Sample</div>
<div class="t" style="left:10.4px;top:74.3px;font-size:6px;color:#404040;font-family:'Liberation Mono','Noto Serif CJK SC',monospace;letter-spacing:-0.5px;font-weight:700"><span style="letter-spacing:0;font-size:6.1px">叶根友刀锋黑草</span> - <span style="letter-spacing:0;font-size:6.1px">企业版</span></div>
<div class="t" style="left:155.6px;top:72.8px;font-size:5.6px;color:#444;font-family:'Liberation Serif',serif">T</div><div class="t" style="left:157.8px;top:74.7px;font-size:5.8px;color:#2e2e2e;font-family:'Liberation Serif',serif;font-weight:bold">T</div>
<div class="t" style="left:165.8px;top:73.3px;font-size:6.4px;color:#111;font-family:'Noto Serif CJK SC',serif;font-weight:900;letter-spacing:-0.1px;transform:skewX(-12deg);">字体样式</div>
<div class="t" style="left:10.4px;top:84.4px;font-size:6px;color:#404040;font-family:'Liberation Mono','Noto Serif CJK SC',monospace;letter-spacing:-0.5px;font-weight:700"><span style="letter-spacing:0;font-size:6.1px">鶴源椿礼學　　潮達</span></div>
<div class="t" style="left:155.6px;top:82.9px;font-size:5.6px;color:#444;font-family:'Liberation Serif',serif">T</div><div class="t" style="left:157.8px;top:84.8px;font-size:5.8px;color:#2e2e2e;font-family:'Liberation Serif',serif;font-weight:bold">T</div>
<div class="t" style="left:165.8px;top:83.4px;font-size:6.4px;color:#2a2a2a;font-family:'Noto Serif CJK SC',serif;font-weight:700;letter-spacing:-0.1px;">字體樣式</div>
<div class="t" style="left:10.4px;top:94.0px;font-size:6px;color:#404040;font-family:'Liberation Mono','Noto Serif CJK SC',monospace;letter-spacing:-0.5px;font-weight:700"><span style="letter-spacing:0;font-size:6.1px">新宋体</span></div>
<div class="t" style="left:155.6px;top:92.5px;font-size:5.6px;color:#444;font-family:'Liberation Serif',serif">T</div><div class="t" style="left:157.8px;top:94.4px;font-size:5.8px;color:#2e2e2e;font-family:'Liberation Serif',serif;font-weight:bold">T</div>
<div class="t" style="left:165.8px;top:93.0px;font-size:6.4px;color:#2a2a2a;font-family:'Noto Serif CJK SC',serif;font-weight:600;letter-spacing:-0.1px;">字体样式</div>
<div class="t" style="left:10.4px;top:104.4px;font-size:6px;color:#404040;font-family:'Liberation Mono','Noto Serif CJK SC',monospace;letter-spacing:-0.5px;font-weight:700"><span style="letter-spacing:0;font-size:6.1px">幼圆</span></div>
<div class="t" style="left:156px;top:103.0px;font-size:7.6px;color:#333;font-family:'Liberation Serif',serif;font-style:italic;font-weight:bold">O</div>
<div class="t" style="left:165.8px;top:103.4px;font-size:6.4px;color:#2a2a2a;font-family:'Noto Sans CJK SC',sans-serif;font-weight:500;letter-spacing:-0.1px;">字体样式</div>
<div class="t" style="left:10.4px;top:115.2px;font-size:6px;color:#404040;font-family:'Liberation Mono','Noto Serif CJK SC',monospace;letter-spacing:-0.5px;font-weight:700"><span style="letter-spacing:0;font-size:6.1px">禹卫书法行书简体</span></div>
<div class="t" style="left:155.6px;top:113.7px;font-size:5.6px;color:#444;font-family:'Liberation Serif',serif">T</div><div class="t" style="left:157.8px;top:115.6px;font-size:5.8px;color:#2e2e2e;font-family:'Liberation Serif',serif;font-weight:bold">T</div>
<div class="t" style="left:165.8px;top:114.2px;font-size:6.4px;color:#111;font-family:'Noto Serif CJK SC',serif;font-weight:800;letter-spacing:-0.1px;transform:skewX(-12deg);">字体样式</div>
<div class="t" style="left:10.4px;top:125.0px;font-size:6px;color:#404040;font-family:'Liberation Mono','Noto Serif CJK SC',monospace;letter-spacing:-0.5px;font-weight:700"><span style="letter-spacing:0;font-size:6.1px">禹卫书法隶书简体</span></div>
<div class="t" style="left:155.6px;top:123.5px;font-size:5.6px;color:#444;font-family:'Liberation Serif',serif">T</div><div class="t" style="left:157.8px;top:125.4px;font-size:5.8px;color:#2e2e2e;font-family:'Liberation Serif',serif;font-weight:bold">T</div>
<div class="t" style="left:165.8px;top:124.0px;font-size:6.4px;color:#222;font-family:'Noto Serif CJK SC',serif;font-weight:800;letter-spacing:-0.1px;">字体样式</div>
<div class="t" style="left:10.4px;top:135.0px;font-size:6px;color:#404040;font-family:'Liberation Mono','Noto Serif CJK SC',monospace;letter-spacing:-0.5px;font-weight:700"><span style="letter-spacing:0;font-size:6.1px">造字工房版黑（非商用）　常规体</span></div>
<div class="t" style="left:156px;top:133.6px;font-size:7.6px;color:#333;font-family:'Liberation Serif',serif;font-style:italic;font-weight:bold">O</div>
<div class="t" style="left:165.8px;top:134.0px;font-size:6.4px;color:#111;font-family:'Noto Sans CJK SC',sans-serif;font-weight:900;letter-spacing:-0.1px;">字体样式</div>
<div class="t" style="left:10.4px;top:145.2px;font-size:6px;color:#404040;font-family:'Liberation Mono','Noto Serif CJK SC',monospace;letter-spacing:-0.5px;font-weight:700"><span style="letter-spacing:0;font-size:6.1px">造字工房黄金时代（非商用）　细体</span></div>
<div class="t" style="left:155.6px;top:143.7px;font-size:5.6px;color:#444;font-family:'Liberation Serif',serif">T</div><div class="t" style="left:157.8px;top:145.6px;font-size:5.8px;color:#2e2e2e;font-family:'Liberation Serif',serif;font-weight:bold">T</div>
<div class="t" style="left:165.8px;top:144.2px;font-size:6.4px;color:#2a2a2a;font-family:'Noto Sans CJK SC',sans-serif;font-weight:500;letter-spacing:-0.1px;">字体样式</div>
<div class="t" style="left:10.4px;top:159.3px;font-size:6px;color:#404040;font-family:'Liberation Mono','Noto Serif CJK SC',monospace;letter-spacing:-0.5px;font-weight:700">FZLanTingHei-EL-GBK Regular</div>
<div class="t" style="left:155.6px;top:157.8px;font-size:5.6px;color:#444;font-family:'Liberation Serif',serif">T</div><div class="t" style="left:157.8px;top:159.7px;font-size:5.8px;color:#2e2e2e;font-family:'Liberation Serif',serif;font-weight:bold">T</div>
<div class="t" style="left:165.8px;top:158.3px;font-size:6.4px;color:#222;font-family:'Noto Sans CJK JP',sans-serif;font-weight:500;letter-spacing:-0.1px;">文字もじモジ</div>
<div class="t" style="left:10.4px;top:168.4px;font-size:6px;color:#404040;font-family:'Liberation Mono','Noto Serif CJK SC',monospace;letter-spacing:-0.5px;font-weight:700">KSW <span style="letter-spacing:0;font-size:6.1px">般若お試し</span> <span style="letter-spacing:0;font-size:6.1px">教育漢字</span></div>
<div class="t" style="left:155.6px;top:166.9px;font-size:5.6px;color:#444;font-family:'Liberation Serif',serif">T</div><div class="t" style="left:157.8px;top:168.8px;font-size:5.8px;color:#2e2e2e;font-family:'Liberation Serif',serif;font-weight:bold">T</div>
<div class="t" style="left:165.8px;top:167.4px;font-size:6.4px;color:#111;font-family:'Noto Serif CJK SC',serif;font-weight:800;letter-spacing:-0.1px;transform:skewX(-8deg);">文字もじモジ</div>
<div class="t" style="left:10.4px;top:179.2px;font-size:6px;color:#404040;font-family:'Liberation Mono','Noto Serif CJK SC',monospace;letter-spacing:-0.5px;font-weight:700">LiuLiTaiXingShu Regular</div>
<div class="t" style="left:155.6px;top:177.7px;font-size:5.6px;color:#444;font-family:'Liberation Serif',serif">T</div><div class="t" style="left:157.8px;top:179.6px;font-size:5.8px;color:#2e2e2e;font-family:'Liberation Serif',serif;font-weight:bold">T</div>
<div class="t" style="left:165.8px;top:178.2px;font-size:5.6px;color:#1a1a1a;font-family:'Noto Serif CJK SC',serif;font-weight:800;letter-spacing:-0.1px;transform:skewX(-8deg);">文字もじモジ</div>
<div class="t" style="left:10.4px;top:189.6px;font-size:6px;color:#404040;font-family:'Liberation Mono','Noto Serif CJK SC',monospace;letter-spacing:-0.5px;font-weight:700">LiuLiXingShu Regular</div>
<div class="t" style="left:155.6px;top:188.1px;font-size:5.6px;color:#444;font-family:'Liberation Serif',serif">T</div><div class="t" style="left:157.8px;top:190.0px;font-size:5.8px;color:#2e2e2e;font-family:'Liberation Serif',serif;font-weight:bold">T</div>
<div class="t" style="left:165.8px;top:188.6px;font-size:5.6px;color:#1a1a1a;font-family:'Noto Serif CJK SC',serif;font-weight:800;letter-spacing:-0.1px;transform:skewX(-8deg);">文字もじモジ</div>
<div class="t" style="left:10.4px;top:200.0px;font-size:6px;color:#7a7a7a;font-family:'Liberation Mono','Noto Serif CJK SC',monospace;letter-spacing:-0.5px;font-weight:700"><span style="letter-spacing:0;font-size:6.1px">ＭＳ</span> <span style="letter-spacing:0;font-size:6.1px">Ｐゴシック</span></div>
<div class="t" style="left:155.6px;top:198.5px;font-size:5.6px;color:#444;font-family:'Liberation Serif',serif">T</div><div class="t" style="left:157.8px;top:200.4px;font-size:5.8px;color:#2e2e2e;font-family:'Liberation Serif',serif;font-weight:bold">T</div>
<div class="t" style="left:165.8px;top:199.0px;font-size:6.4px;color:#222;font-family:'Noto Sans CJK JP',sans-serif;font-weight:700;letter-spacing:-0.9px;">文字もじモジ</div>
<div class="t" style="left:10.4px;top:210.4px;font-size:6px;color:#404040;font-family:'Liberation Mono','Noto Serif CJK SC',monospace;letter-spacing:-0.5px;font-weight:700">MS UI Gothic <span style="letter-spacing:0;font-size:6.1px">標準</span></div>
<div class="t" style="left:155.6px;top:208.9px;font-size:5.6px;color:#444;font-family:'Liberation Serif',serif">T</div><div class="t" style="left:157.8px;top:210.8px;font-size:5.8px;color:#2e2e2e;font-family:'Liberation Serif',serif;font-weight:bold">T</div>
<div class="t" style="left:165.8px;top:209.4px;font-size:6.4px;color:#222;font-family:'Noto Sans CJK JP',sans-serif;font-weight:700;letter-spacing:-1.1px;">文字もじモジ</div>
<div class="t" style="left:10.4px;top:220.2px;font-size:6px;color:#7a7a7a;font-family:'Liberation Mono','Noto Serif CJK SC',monospace;letter-spacing:-0.5px;font-weight:700"><span style="letter-spacing:0;font-size:6.1px">ＭＳ</span> <span style="letter-spacing:0;font-size:6.1px">ゴシック</span></div>
<div class="t" style="left:155.6px;top:218.7px;font-size:5.6px;color:#444;font-family:'Liberation Serif',serif">T</div><div class="t" style="left:157.8px;top:220.6px;font-size:5.8px;color:#2e2e2e;font-family:'Liberation Serif',serif;font-weight:bold">T</div>
<div class="t" style="left:165.8px;top:219.2px;font-size:6.4px;color:#222;font-family:'Noto Sans CJK JP',sans-serif;font-weight:700;letter-spacing:-0.1px;">文字もじモジ</div>
<div class="t" style="left:10.4px;top:230.6px;font-size:6px;color:#404040;font-family:'Liberation Mono','Noto Serif CJK SC',monospace;letter-spacing:-0.5px;font-weight:700">RiWenLOGO Regular</div>
<div class="t" style="left:155.6px;top:229.1px;font-size:5.6px;color:#444;font-family:'Liberation Serif',serif">T</div><div class="t" style="left:157.8px;top:231.0px;font-size:5.8px;color:#2e2e2e;font-family:'Liberation Serif',serif;font-weight:bold">T</div>
<div class="t" style="left:165.8px;top:229.6px;font-size:6.4px;color:#111;font-family:'Noto Sans CJK JP',sans-serif;font-weight:900;letter-spacing:-0.1px;">文字もじモジ</div>
<div class="t" style="left:10.4px;top:240.8px;font-size:6px;color:#404040;font-family:'Liberation Mono','Noto Serif CJK SC',monospace;letter-spacing:-0.5px;font-weight:700">RiWenMaoBi Regular</div>
<div class="t" style="left:155.6px;top:239.3px;font-size:5.6px;color:#444;font-family:'Liberation Serif',serif">T</div><div class="t" style="left:157.8px;top:241.2px;font-size:5.8px;color:#2e2e2e;font-family:'Liberation Serif',serif;font-weight:bold">T</div>
<div class="t" style="left:165.8px;top:239.8px;font-size:6.4px;color:#111;font-family:'Noto Serif CJK SC',serif;font-weight:900;letter-spacing:-0.1px;transform:skewX(-10deg);">文字もじモジ</div>
<div class="t" style="left:10.4px;top:250.6px;font-size:6px;color:#404040;font-family:'Liberation Mono','Noto Serif CJK SC',monospace;letter-spacing:-0.5px;font-weight:700">RiWenMaoBi-B Regular</div>
<div class="t" style="left:155.6px;top:249.1px;font-size:5.6px;color:#444;font-family:'Liberation Serif',serif">T</div><div class="t" style="left:157.8px;top:251.0px;font-size:5.8px;color:#2e2e2e;font-family:'Liberation Serif',serif;font-weight:bold">T</div>
<div class="t" style="left:165.8px;top:249.6px;font-size:6.4px;color:#111;font-family:'Noto Serif CJK SC',serif;font-weight:900;letter-spacing:-0.1px;transform:skewX(-10deg);">文字もじモジ</div>
</div>
<div class="a" style="left:558.8px;top:77.5px;width:5.9px;height:251.5px;background:#9b9d9b"></div>
<div class="a" style="left:558.8px;top:312.5px;width:5.9px;height:16.5px;background:#949694"></div>
<div class="a" style="left:559.3px;top:119.6px;width:4.9px;height:4.8px;background:#dcdcdc"></div>
<div class="a" style="left:559.3px;top:307px;width:4.9px;height:5.4px;background:#e8e8e8"></div>
<div class="a" style="left:559.7px;top:79px;border:2px solid transparent;border-bottom:2.6px solid #111;border-top:0"></div>
<div class="a" style="left:559.7px;top:324.6px;border:2px solid transparent;border-top:2.6px solid #111;border-bottom:0"></div>
<div class="a" style="left:395.8px;top:148.7px;width:6px;height:6px;border-radius:50%;background:rgba(230,230,105,0.8)"></div>
<svg class="a" style="left:398.3px;top:152.2px" width="7" height="10" viewBox="0 0 7 10"><path d="M0.6 0.6v7.2l1.7-1.6 1.2 2.8 1.1-.5-1.2-2.7h2.3z" fill="#fff" stroke="#333" stroke-width="0.6"/></svg>
<div class="a" style="left:406.5px;top:244.8px;width:6px;height:6px;border-radius:50%;background:rgba(230,230,105,0.8)"></div>
<svg class="a" style="left:409.0px;top:248.3px" width="7" height="10" viewBox="0 0 7 10"><path d="M0.6 0.6v7.2l1.7-1.6 1.2 2.8 1.1-.5-1.2-2.7h2.3z" fill="#fff" stroke="#333" stroke-width="0.6"/></svg>
<!-- WATERMARK -->
<svg class="a" style="left:488px;top:10px" width="145" height="38" viewBox="488 10 145 38">
<g fill="none" stroke="rgba(255,255,255,0.56)" stroke-width="1.25" stroke-linecap="round" stroke-linejoin="round">
<path d="M491.500 18.500c3.500-.5 5.500 1 5.500 4.500v12c0 4 2 6.500 6 7"/>
<path d="M503.500 36.500V22c0-3 1.500-4.800 4.500-4.800l1.500-3 1.600 3h16.800l1.600-3 1.500 3c3 0 4.500 1.800 4.500 4.800v14.500c0 3.600-1.900 5.500-5.500 5.500h-21c-3.600 0-5.500-1.900-5.500-5.500z"/>
</g>
<text x="0" y="0" transform="translate(538.6 41.4) scale(1.035 1.05)" font-family="'Noto Sans CJK SC',sans-serif" font-weight="300" font-size="28.6" fill="rgba(255,255,255,0.6)" letter-spacing="0">虎课网</text>
<text x="0" y="0" transform="translate(510.6 26.5) scale(1.05 0.47)" font-family="'Noto Sans CJK SC',sans-serif" font-weight="300" font-size="16" fill="rgba(255,255,255,0.6)">王</text>
</svg>
</div>
</body></html>
